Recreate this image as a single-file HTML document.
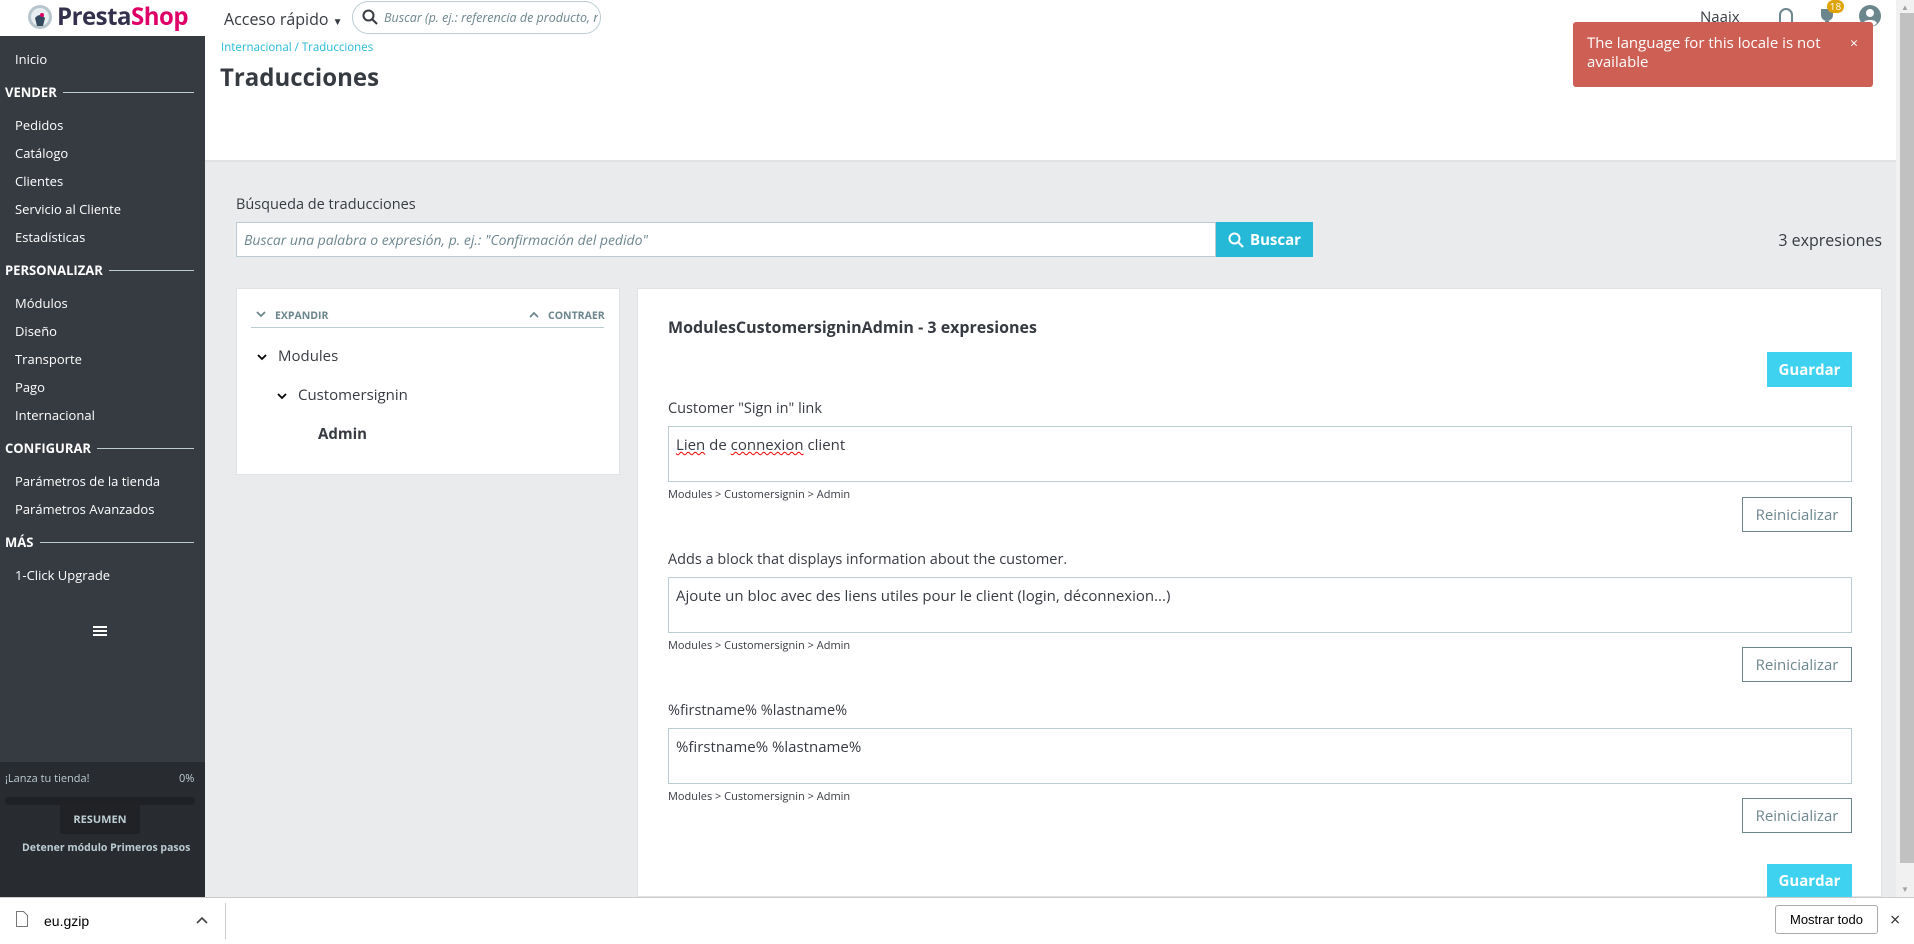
<!DOCTYPE html>
<html><head><meta charset="utf-8"><style>
*{box-sizing:border-box;margin:0;padding:0}
body{width:1914px;height:944px;overflow:hidden;position:relative;background:#eaebed;font-family:"Open Sans","Liberation Sans","DejaVu Sans",sans-serif;color:#363a41}
.a{position:absolute;white-space:nowrap}
.sb{position:absolute;left:0;top:36px;width:205px;height:861px;background:#363a41}
.si{position:absolute;left:15px;font-size:13px;color:#fff;line-height:16px}
.sh{position:absolute;left:5px;font-size:13px;font-weight:bold;color:#fff;line-height:16px}
.sh i{position:absolute;top:8px;height:1px;background:#bbcdd2}
.btn{position:absolute;display:flex;align-items:center;justify-content:center;font-size:15px}
.g{background:#3ed2f0;color:#fff;font-weight:bold}
.r{border:1px solid #6c868e;background:#fff;color:#6c868e}
.ta{position:absolute;left:668px;width:1184px;height:56px;border:1px solid #bbcdd2;background:#fff;font-size:15px;padding:8px 0 0 7px}
.lb{position:absolute;left:668px;font-size:14.5px;color:#363a41}
.pt{position:absolute;left:668px;font-size:11px;color:#363a41}
</style></head><body>
<div class="a" style="left:0;top:0;width:1896px;height:36px;background:#fff"></div>
<svg class="a" style="left:27px;top:4px" width="26" height="26" viewBox="0 0 26 26"><circle cx="13" cy="13" r="12" fill="#b6c6cc"/><circle cx="13" cy="13" r="9" fill="#e8eef0"/><path d="M8 14 q5 -6 10 0 l-2 8 h-6z" fill="#34495e"/><circle cx="15" cy="11" r="2" fill="#df0067"/></svg>
<div class="a" style="left:57px;top:3px;font-size:24px;line-height:28px;color:#34314c;font-weight:bold;letter-spacing:-0.5px">Presta<span style="color:#df0067">Shop</span></div>
<div class="a" style="left:224px;top:8px;font-size:16px;color:#363a41">Acceso rápido <span style="font-size:10px">▼</span></div>
<div class="a" style="left:352px;top:1px;width:249px;height:33px;border:1px solid #bbcdd2;border-radius:17px;background:#fff"></div>
<svg class="a" style="left:362px;top:9px" width="16" height="16" viewBox="0 0 16 16"><circle cx="6.5" cy="6.5" r="5" fill="none" stroke="#363a41" stroke-width="2"/><path d="M10 10l5 5" stroke="#363a41" stroke-width="2"/></svg>
<div class="a" style="left:384px;top:9px;font-size:12.5px;font-style:italic;color:#6c868e;width:214px;overflow:hidden">Buscar (p. ej.: referencia de producto, no</div>
<div class="a" style="left:1700px;top:7px;font-size:15px;color:#363a41">Naaix</div>
<svg class="a" style="left:1777px;top:6px" width="18" height="22" viewBox="0 0 18 22"><path d="M3 17 V9 a6 6 0 0 1 12 0 V17 h2 v2 H1 v-2z" fill="none" stroke="#6c868e" stroke-width="2"/></svg>
<svg class="a" style="left:1818px;top:8px" width="18" height="20" viewBox="0 0 18 20"><path d="M3 1h12v6a6 6 0 0 1-12 0z M7 13h4v3h3v3H4v-3h3z" fill="#6c868e"/></svg>
<div class="a" style="left:1827px;top:0;width:17px;height:13px;border-radius:7px;background:#e0a200;color:#fff;font-size:10px;text-align:center;line-height:13px">18</div>
<svg class="a" style="left:1859px;top:5px" width="22" height="22" viewBox="0 0 22 22"><circle cx="11" cy="11" r="11" fill="#6c868e"/><circle cx="11" cy="8" r="4" fill="#fff"/><path d="M4 18 a8 6 0 0 1 14 0 a9 9 0 0 1 -14 0z" fill="#fff"/></svg>
<div class="sb"></div>
<div class="si" style="top:51px">Inicio</div>
<div class="sh" style="top:84px;width:195px">VENDER<i style="left:58px;width:131px"></i></div>
<div class="si" style="top:117px">Pedidos</div>
<div class="si" style="top:145px">Catálogo</div>
<div class="si" style="top:173px">Clientes</div>
<div class="si" style="top:201px">Servicio al Cliente</div>
<div class="si" style="top:229px">Estadísticas</div>
<div class="sh" style="top:262px;width:195px">PERSONALIZAR<i style="left:104px;width:85px"></i></div>
<div class="si" style="top:295px">Módulos</div>
<div class="si" style="top:323px">Diseño</div>
<div class="si" style="top:351px">Transporte</div>
<div class="si" style="top:379px">Pago</div>
<div class="si" style="top:407px">Internacional</div>
<div class="sh" style="top:440px;width:195px">CONFIGURAR<i style="left:92px;width:97px"></i></div>
<div class="si" style="top:473px">Parámetros de la tienda</div>
<div class="si" style="top:501px">Parámetros Avanzados</div>
<div class="sh" style="top:534px;width:195px">MÁS<i style="left:35px;width:154px"></i></div>
<div class="si" style="top:567px">1-Click Upgrade</div>
<div class="a" style="left:93px;top:626px;width:14px;height:2px;background:#fff;box-shadow:0 4px 0 #fff,0 8px 0 #fff"></div>
<div class="a" style="left:0;top:762px;width:205px;height:135px;background:#282b30"></div>
<div class="a" style="left:5px;top:771px;font-size:11px;color:#bbcdd2">¡Lanza tu tienda!</div>
<div class="a" style="left:179px;top:771px;font-size:11px;color:#bbcdd2">0%</div>
<div class="a" style="left:5px;top:797px;width:190px;height:8px;border-radius:4px;background:#1f2125"></div>
<div class="a" style="left:60px;top:805px;width:80px;height:29px;background:#202226;color:#bbcdd2;font-size:11px;font-weight:bold;text-align:center;line-height:29px">RESUMEN</div>
<div class="a" style="left:22px;top:841px;font-size:10.5px;font-weight:bold;color:#bbcdd2">Detener módulo Primeros pasos</div>
<div class="a" style="left:205px;top:36px;width:1691px;height:126px;background:#fff;border-bottom:2px solid #dfe3e6"></div>
<div class="a" style="left:221px;top:40px;font-size:11.5px;color:#25b9d7">Internacional / Traducciones</div>
<div class="a" style="left:220px;top:61px;font-size:24px;font-weight:bold;color:#363a41">Traducciones</div>
<div class="a" style="left:1573px;top:22px;width:300px;height:65px;background:#cd5f55;border-radius:3px"></div>
<div class="a" style="left:1587px;top:34px;font-size:15px;color:#fff;line-height:19px">The language for this locale is not<br>available</div>
<div class="a" style="left:1850px;top:34px;font-size:14px;color:#fff">×</div>
<div class="a" style="left:236px;top:195px;font-size:14.5px;color:#363a41">Búsqueda de traducciones</div>
<div class="a" style="left:236px;top:222px;width:980px;height:35px;border:1px solid #bbcdd2;background:#fff"></div>
<div class="a" style="left:244px;top:231px;font-size:14px;font-style:italic;color:#6c868e">Buscar una palabra o expresión, p. ej.: "Confirmación del pedido"</div>
<div class="btn" style="left:1216px;top:222px;width:97px;height:35px;background:#25b9d7;color:#fff;font-weight:bold"><svg width="16" height="16" viewBox="0 0 16 16" style="margin-right:6px"><circle cx="6.5" cy="6.5" r="5" fill="none" stroke="#fff" stroke-width="2"/><path d="M10 10l5 5" stroke="#fff" stroke-width="2.2"/></svg>Buscar</div>
<div class="a" style="left:1765px;top:229px;width:117px;text-align:right;font-size:16px;color:#363a41">3 expresiones</div>
<div class="a" style="left:236px;top:288px;width:384px;height:187px;background:#fff;border:1px solid #dfe3e6"></div>
<svg class="a" style="left:256px;top:311px" width="10" height="7" viewBox="0 0 10 7"><path d="M1 1l4 4 4-4" fill="none" stroke="#6c868e" stroke-width="1.8"/></svg>
<div class="a" style="left:275px;top:309px;font-size:10.5px;font-weight:bold;color:#6c868e">EXPANDIR</div>
<svg class="a" style="left:529px;top:311px" width="10" height="7" viewBox="0 0 10 7"><path d="M1 6l4-4 4 4" fill="none" stroke="#6c868e" stroke-width="1.8"/></svg>
<div class="a" style="left:548px;top:309px;font-size:10.5px;font-weight:bold;color:#6c868e">CONTRAER</div>
<div class="a" style="left:251px;top:327px;width:353px;height:1px;background:#bbcdd2"></div>
<svg class="a" style="left:257px;top:354px" width="10" height="7" viewBox="0 0 10 7"><path d="M1 1l4 4 4-4" fill="none" stroke="#000" stroke-width="1.8"/></svg>
<div class="a" style="left:278px;top:346px;font-size:15px;color:#363a41">Modules</div>
<svg class="a" style="left:277px;top:393px" width="10" height="7" viewBox="0 0 10 7"><path d="M1 1l4 4 4-4" fill="none" stroke="#000" stroke-width="1.8"/></svg>
<div class="a" style="left:298px;top:385px;font-size:15px;color:#363a41">Customersignin</div>
<div class="a" style="left:318px;top:424px;font-size:15px;font-weight:bold;color:#363a41">Admin</div>
<div class="a" style="left:637px;top:288px;width:1245px;height:609px;background:#fff;border:1px solid #dfe3e6"></div>
<div class="a" style="left:668px;top:316px;font-size:16px;font-weight:bold;color:#363a41">ModulesCustomersigninAdmin - 3 expresiones</div>
<div class="btn g" style="left:1767px;top:352px;width:85px;height:35px">Guardar</div>
<div class="lb" style="top:399px">Customer "Sign in" link</div>
<div class="ta" style="top:426px"><span style="text-decoration:underline wavy #e00;text-decoration-thickness:1px">Lien</span> de <span style="text-decoration:underline wavy #e00;text-decoration-thickness:1px">connexion</span> client</div>
<div class="pt" style="top:487px">Modules &gt; Customersignin &gt; Admin</div>
<div class="btn r" style="left:1742px;top:497px;width:110px;height:35px">Reinicializar</div>
<div class="lb" style="top:550px">Adds a block that displays information about the customer.</div>
<div class="ta" style="top:577px">Ajoute un bloc avec des liens utiles pour le client (login, déconnexion...)</div>
<div class="pt" style="top:638px">Modules &gt; Customersignin &gt; Admin</div>
<div class="btn r" style="left:1742px;top:647px;width:110px;height:35px">Reinicializar</div>
<div class="lb" style="top:701px">%firstname% %lastname%</div>
<div class="ta" style="top:728px">%firstname% %lastname%</div>
<div class="pt" style="top:789px">Modules &gt; Customersignin &gt; Admin</div>
<div class="btn r" style="left:1742px;top:798px;width:110px;height:35px">Reinicializar</div>
<div class="btn g" style="left:1767px;top:864px;width:85px;height:33px">Guardar</div>
<div class="a" style="left:1896px;top:0;width:18px;height:897px;background:#f1f1f1"></div>
<div class="a" style="left:1900px;top:13px;width:14px;height:850px;background:#c1c1c1"></div>
<div class="a" style="left:1901px;top:2px;font-size:8px;color:#a3a3a3">▲</div>
<div class="a" style="left:1901px;top:884px;font-size:8px;color:#a3a3a3">▼</div>
<div class="a" style="left:0;top:897px;width:1914px;height:47px;background:#fff;border-top:1px solid #ccc"></div>
<svg class="a" style="left:16px;top:911px" width="12" height="16" viewBox="0 0 12 16"><path d="M0.5 0.5h7l4 4v11h-11z" fill="#fff" stroke="#777"/></svg>
<div class="a" style="left:44px;top:913px;font-size:14px;color:#000;font-family:'Liberation Sans',sans-serif">eu.gzip</div>
<svg class="a" style="left:196px;top:916px" width="12" height="8" viewBox="0 0 12 8"><path d="M1 7l5-5 5 5" fill="none" stroke="#444" stroke-width="1.6"/></svg>
<div class="a" style="left:225px;top:903px;width:1px;height:36px;background:#ccc"></div>
<div class="a" style="left:1775px;top:905px;width:103px;height:29px;border:1px solid #aaa;border-radius:3px;background:#fff;font-size:13px;text-align:center;line-height:27px;color:#000;font-family:'Liberation Sans',sans-serif">Mostrar todo</div>
<div class="a" style="left:1890px;top:908px;font-size:18px;color:#333">×</div>
</body></html>
